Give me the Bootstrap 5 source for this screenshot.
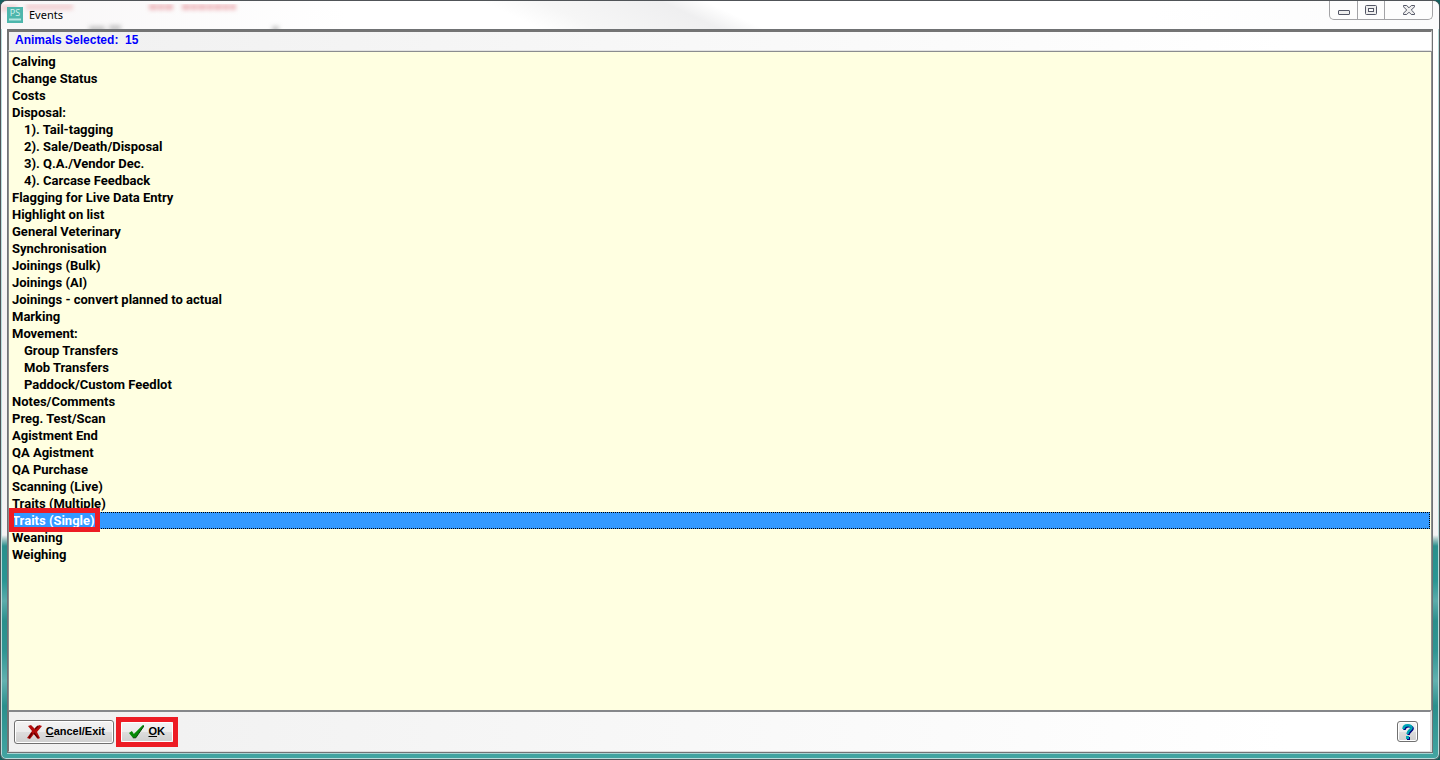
<!DOCTYPE html>
<html lang="en">
<head>
<meta charset="utf-8">
<meta name="viewport" content="width=device-width, initial-scale=1">
<title>Events</title>
<link href="https://cdn.jsdelivr.net/npm/bootstrap@5.3.0/dist/css/bootstrap.min.css" rel="stylesheet">
<style>
body { background: #14605f; color: #000; font-family: "Liberation Sans", Arial, sans-serif; font-size: 11px; line-height: 17px; }
.window-frame {
  border: 1px solid #505458; border-radius: 7px 7px 6px 6px; padding: 0 6px 6px; box-shadow: inset 0 0 0 1px #b9dcdb;
  background:
    linear-gradient(#fff0 0 534px, #a9c9c8 538px, #2a8f8c 545px, #2a9694 580px, #5cacab 600px, #2a8f8c 620px, #2f9593 650px, #62b1b0 680px, #2a8f8c 705px, #43a5a2 100%),
    linear-gradient(#fff 0 160px, #f5f2f3 300px, #f3f3f4);
}
.title-bar { height: 28px; margin: 0 -6px; padding-left: 6px; border-radius: 6px 6px 0 0;
  background: linear-gradient(25deg, transparent 36%, #f6f6f6 40%, #efeff0 48%, transparent 51%), linear-gradient(90deg, #f8f6f7, #fff 24%, #fff 80%, #fbfbfc); }
.title-text { font: 11px/17px "Noto Sans", "Open Sans", sans-serif; }
.app-icon { width: 16px; height: 16px; }
.title-label { gap: 6px; padding-top: 5px; }
.glass { inset: 0; overflow: hidden; }
.glass svg { width: 300px; height: 28px; }
.caption-group { height: 19px; margin-right: 6px; border: 1px solid #a3a3a6; border-top: 0; border-radius: 0 0 5px 5px; background: #fdfdfd; }
.caption-btn { width: 27px; padding: 0; border: 0; border-right: 1px solid #a3a3a6; background: transparent; }
.caption-btn.min-btn { width: 28px; padding-top: 4px; }
.caption-btn.close-btn { width: 47px; border-right: 0; }
.caption-btn svg { display: block; margin: auto; }
.client { border: 1px solid #707274; background: #fff; box-shadow: 0 1px 0 #a5d5d3; }
.info-bar { height: 21px; padding-left: 6px; border-top: 2px solid #747474; border-left: 1px solid #747474; border-right: 1px solid #ddd; border-bottom: 1px solid #e2e2e2; color: #00f; font-size: 12px; background: linear-gradient(90deg, #f0f0f0, #fff 90%); }
.event-list { background: #ffffe1; border: 0 solid #8b8d90; border-width: 1px 1px 0; padding: 1px 1px 0 0; min-height: 0; }
.event-item { border: 0; padding: 1px 3px 0; height: 17px; background: transparent; color: #000; text-align: left; font: bold 13px/16px Roboto, sans-serif; white-space: pre; }
.event-item.sub { padding-left: 15px; }
.event-item.chosen { background: #3399ff; color: #fff; outline: 1px dotted #000; outline-offset: -1px; }
.callout { border: 5px solid #ed1c24; pointer-events: none; }
.item-callout { left: 0; right: auto; width: 91px; top: -4px; bottom: -3px; }
.btn-callout { inset: -4px; }
.action-bar { height: 42px; padding: 0 12px 0 5px; border-top: 2px solid #85878a; border-left: 1px solid #747474; border-right: 2px solid #ddd; border-bottom: 1px solid #ddd; background: linear-gradient(90deg, #f0f0f0, #fff 90%); }
.tool-btn { height: 24px; padding: 0 8px; border: 1px solid #707070; border-radius: 3px; box-shadow: inset 0 0 0 1px #fff; background: linear-gradient(#f3f3f3, #ebebeb 50%, #ddd 51%, #cfcfcf); font-size: 11px; font-weight: bold; line-height: 17px; color: #000; }
.cancel-btn { width: 100px; }
.ok-wrap { margin-left: 6px; }
.ok-btn { width: 54px; height: 22px; border-color: #ddd; }
.help-btn { width: 21px; height: 21px; padding: 0; }
</style>
</head>
<body>
<div class="window-frame d-flex flex-column vh-100">
  <header class="title-bar position-relative d-flex align-items-start">
    <div class="glass position-absolute" aria-hidden="true">
      <svg viewBox="0 0 300 28">
        <defs><filter id="soft"><feGaussianBlur stdDeviation="2"/></filter></defs>
        <g filter="url(#soft)" stroke-width="6" fill="none">
          <path d="M0 7h16M25 6h47" stroke="#efb9bd" opacity=".6"/>
          <path d="M148 6h24M181 6h54" stroke="#e99fa5" stroke-dasharray="8 1 6 1" opacity=".7"/>
          <path d="M88 28h16M108 27h12M271 28h7" stroke="#999" opacity=".5"/>
        </g>
      </svg>
    </div>
    <div class="title-label d-flex align-items-center position-relative flex-grow-1">
      <svg class="app-icon" viewBox="0 0 16 16" aria-hidden="true"><rect width="16" height="16" fill="#4db6ac"/><text x="8" y="9" text-anchor="middle" font-size="9" font-family="Open Sans" fill="#d5f3ef">PS</text><path d="M2 12.5h12" stroke="#b6e5e0" stroke-width="2"/></svg>
      <span class="title-text">Events</span>
    </div>
    <div class="caption-group d-flex position-relative">
      <button class="caption-btn min-btn" type="button" aria-label="Minimize"><svg width="12" height="6" viewBox="0 0 12 6"><rect x=".5" y="1.5" width="11" height="4" rx=".5" fill="#eee" stroke="#535665"/></svg></button>
      <button class="caption-btn" type="button" aria-label="Restore"><svg width="12" height="10" viewBox="0 0 12 10"><rect x=".5" y=".5" width="11" height="9" rx="1" fill="#eee" stroke="#535665"/><rect x="3.5" y="3.5" width="5" height="3" fill="#fff" stroke="#535665"/></svg></button>
      <button class="caption-btn close-btn" type="button" aria-label="Close"><svg width="12" height="10" viewBox="0 0 12 10"><path d="M.5.5h3.2L6 2.8 8.3.5h3.2v1.3L8.3 5l3.2 3.2v1.3H8.3L6 7.2 3.7 9.500H.5V8.2L3.7 5 .5 1.8z" fill="#eee" stroke="#535665"/></svg></button>
    </div>
  </header>
  <main class="client d-flex flex-column flex-grow-1">
    <div class="info-bar fw-bold">Animals Selected:&nbsp; 15</div>
    <div class="event-list list-group list-group-flush rounded-0 flex-grow-1" role="listbox" aria-label="Events">
      <button type="button" role="option" class="event-item">Calving</button>
      <button type="button" role="option" class="event-item">Change Status</button>
      <button type="button" role="option" class="event-item">Costs</button>
      <button type="button" role="option" class="event-item">Disposal:</button>
      <button type="button" role="option" class="event-item sub">1). Tail-tagging</button>
      <button type="button" role="option" class="event-item sub">2). Sale/Death/Disposal</button>
      <button type="button" role="option" class="event-item sub">3). Q.A./Vendor Dec.</button>
      <button type="button" role="option" class="event-item sub">4). Carcase Feedback</button>
      <button type="button" role="option" class="event-item">Flagging for Live Data Entry</button>
      <button type="button" role="option" class="event-item">Highlight on list</button>
      <button type="button" role="option" class="event-item">General Veterinary</button>
      <button type="button" role="option" class="event-item">Synchronisation</button>
      <button type="button" role="option" class="event-item">Joinings (Bulk)</button>
      <button type="button" role="option" class="event-item">Joinings (AI)</button>
      <button type="button" role="option" class="event-item">Joinings - convert planned to actual</button>
      <button type="button" role="option" class="event-item">Marking</button>
      <button type="button" role="option" class="event-item">Movement:</button>
      <button type="button" role="option" class="event-item sub">Group Transfers</button>
      <button type="button" role="option" class="event-item sub">Mob Transfers</button>
      <button type="button" role="option" class="event-item sub">Paddock/Custom Feedlot</button>
      <button type="button" role="option" class="event-item">Notes/Comments</button>
      <button type="button" role="option" class="event-item">Preg. Test/Scan</button>
      <button type="button" role="option" class="event-item">Agistment End</button>
      <button type="button" role="option" class="event-item">QA Agistment</button>
      <button type="button" role="option" class="event-item">QA Purchase</button>
      <button type="button" role="option" class="event-item">Scanning (Live)</button>
      <button type="button" role="option" class="event-item">Traits (Multiple)</button>
      <button type="button" role="option" class="event-item chosen position-relative" aria-selected="true">Traits (Single)<span class="callout item-callout position-absolute"></span></button>
      <button type="button" role="option" class="event-item">Weaning</button>
      <button type="button" role="option" class="event-item">Weighing</button>
    </div>
    <footer class="action-bar d-flex align-items-center">
      <button type="button" class="tool-btn cancel-btn d-flex align-items-center justify-content-end"><svg class="me-1" width="15" height="16" viewBox="0 0 15 16" aria-hidden="true"><path d="M1 2 4 1l4 4 4-4 3 1-5 6 3 6-2 1-4-5-4 5-3-1 5-7z" fill="#b30c0c"/><path d="m8 5 3-3M7 9l4 5M2 14l3-5" stroke="#600" stroke-width="1.5"/></svg><span><u>C</u>ancel/Exit</span></button>
      <div class="ok-wrap position-relative">
        <button type="button" class="tool-btn ok-btn d-flex align-items-center"><svg class="me-1" width="16" height="14" viewBox="0 0 16 14" aria-hidden="true"><path d="m0 8 3-2 2 3 9-9h2L7 13H4z" fill="#078a07"/><path d="m16 0-9 13H4" stroke="#044004" fill="none"/></svg><span><u>O</u>K</span></button>
        <span class="callout btn-callout position-absolute"></span>
      </div>
      <button type="button" class="tool-btn help-btn ms-auto" aria-label="Help"><svg class="d-block mx-auto" width="13" height="17" viewBox="0 0 13 17" aria-hidden="true"><path d="M2.500 6c0-5 9-4.500 8-1-.5 2-4 2.500-4 6" transform="translate(1 1)" fill="none" stroke="#000080" stroke-width="2.500"/><path d="M2.500 6c0-5 9-4.500 8-1-.5 2-4 2.500-4 6" fill="none" stroke="#00a5b5" stroke-width="2.500"/><path d="M6 14h3v3H6z" fill="#000080"/><path d="M5 13h3v3H5z" fill="#00a5b5"/></svg></button>
    </footer>
  </main>
</div>
<script src="https://cdn.jsdelivr.net/npm/bootstrap@5.3.0/dist/js/bootstrap.bundle.min.js"></script>
</body>
</html>
